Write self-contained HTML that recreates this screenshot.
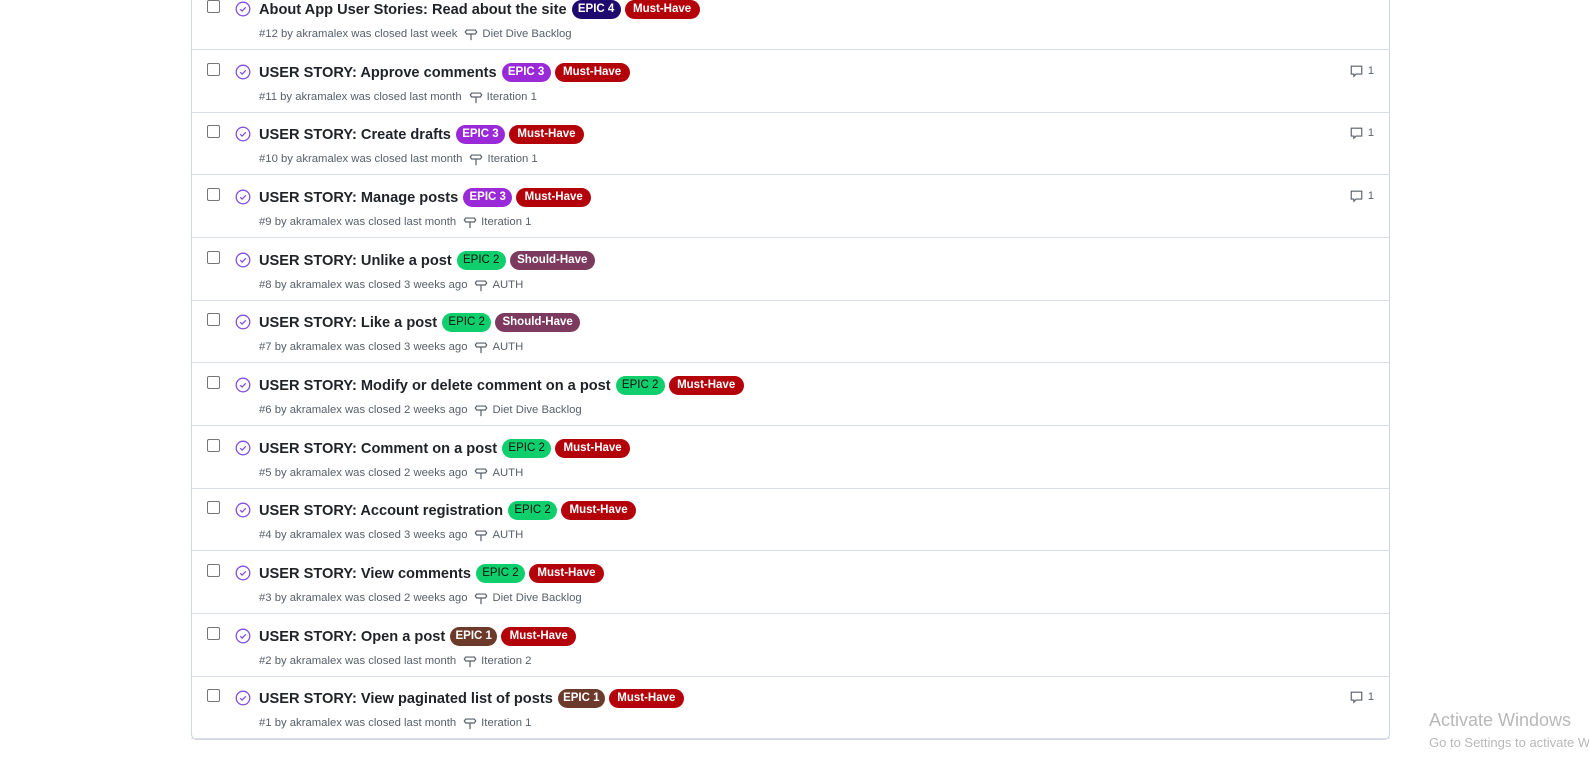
<!DOCTYPE html>
<html><head><meta charset="utf-8"><style>
*{margin:0;padding:0;box-sizing:border-box}
body{width:1589px;height:781px;background:#fff;font-family:"Liberation Sans",sans-serif;position:relative;overflow:hidden}
.box{position:absolute;left:191px;top:-20px;width:1199px;height:760px;border:1px solid #d0d7de;border-radius:6px}
.row{position:absolute;left:191px;width:1199px;height:63px;border-bottom:1px solid #d8dee4}
.cb{position:absolute;left:16px;top:13px;width:13px;height:13px;border:1px solid #767676;border-radius:2px}
.ic{position:absolute;left:44px;top:14px}
.t{position:absolute;left:68px;top:13px;font-size:14.6px;font-weight:bold;color:#1f2328;white-space:nowrap;display:flex;align-items:center}
.l{display:inline-block;height:19px;line-height:19px;border-radius:10px;font-size:11.5px;font-weight:bold;text-align:center;margin-left:4px;color:#fff}
.t .l:first-child{margin-left:5px}
.e4{background:#1e0a6e;width:49px}.e3{background:#9a2ad8;width:49px}.e2{background:#0ecf6c;color:#111;font-weight:normal;width:49px}.e1{background:#6b3a2b;width:47px}
.m{background:#b30209;width:75px}.s{background:#7b3a5e;width:85px}
.meta{position:absolute;left:68px;top:40px;font-size:11.3px;color:#57606a;white-space:nowrap;display:flex;align-items:center}
.meta svg{margin:0 4px 0 7px}
.cm{position:absolute;right:16px;top:14px;font-size:11px;color:#57606a;display:flex;align-items:center;gap:4px}
.win{position:absolute;left:1429px;color:#b8b8b8;white-space:nowrap}
</style></head><body>
<div class="box"></div>
<div id="rows"></div>
<div class="win" style="top:710px;font-size:18px">Activate Windows</div>
<div class="win" style="top:735px;font-size:13px">Go to Settings to activate Windows.</div>
<script>
var d=[
["About App User Stories: Read about the site","e4","EPIC 4","m","Must-Have","#12 by akramalex was closed last week","Diet Dive Backlog",0],
["USER STORY: Approve comments","e3","EPIC 3","m","Must-Have","#11 by akramalex was closed last month","Iteration 1",1],
["USER STORY: Create drafts","e3","EPIC 3","m","Must-Have","#10 by akramalex was closed last month","Iteration 1",1],
["USER STORY: Manage posts","e3","EPIC 3","m","Must-Have","#9 by akramalex was closed last month","Iteration 1",1],
["USER STORY: Unlike a post","e2","EPIC 2","s","Should-Have","#8 by akramalex was closed 3 weeks ago","AUTH",0],
["USER STORY: Like a post","e2","EPIC 2","s","Should-Have","#7 by akramalex was closed 3 weeks ago","AUTH",0],
["USER STORY: Modify or delete comment on a post","e2","EPIC 2","m","Must-Have","#6 by akramalex was closed 2 weeks ago","Diet Dive Backlog",0],
["USER STORY: Comment on a post","e2","EPIC 2","m","Must-Have","#5 by akramalex was closed 2 weeks ago","AUTH",0],
["USER STORY: Account registration","e2","EPIC 2","m","Must-Have","#4 by akramalex was closed 3 weeks ago","AUTH",0],
["USER STORY: View comments","e2","EPIC 2","m","Must-Have","#3 by akramalex was closed 2 weeks ago","Diet Dive Backlog",0],
["USER STORY: Open a post","e1","EPIC 1","m","Must-Have","#2 by akramalex was closed last month","Iteration 2",0],
["USER STORY: View paginated list of posts","e1","EPIC 1","m","Must-Have","#1 by akramalex was closed last month","Iteration 1",1]];
var ms='<svg width="14" height="14" viewBox="0 0 16 16" fill="none" stroke="#57606a" stroke-width="1.4"><path d="M3 3.5h10l1.5 2.25L13 8H3L1.5 5.75zM8 8v7"/></svg>';
var ic='<svg width="16" height="16" viewBox="0 0 16 16" fill="none" stroke="#8250df" stroke-width="1.3"><circle cx="8" cy="8" r="6.8"/><path d="M5.2 8.2l1.9 1.9 3.7-3.8"/></svg>';
var cmt='<svg width="15" height="14" viewBox="0 0 16 16" fill="none" stroke="#57606a" stroke-width="1.3"><path d="M2 2.5h12v9H7.5L5 14v-2.5H2z"/></svg>1';
var h='';
d.forEach(function(r,i){var top=Math.round(-13+62.65*i);
h+='<div class="row" style="top:'+top+'px"><div class="cb"></div><div class="ic">'+ic+'</div><div class="t">'+r[0]+'<span class="l '+r[1]+'">'+r[2]+'</span><span class="l '+r[3]+'">'+r[4]+'</span></div><div class="meta">'+r[5]+ms+r[6]+'</div>'+(r[7]?'<div class="cm">'+cmt+'</div>':'')+'</div>';});
document.getElementById('rows').innerHTML=h;
</script>
</body></html>
